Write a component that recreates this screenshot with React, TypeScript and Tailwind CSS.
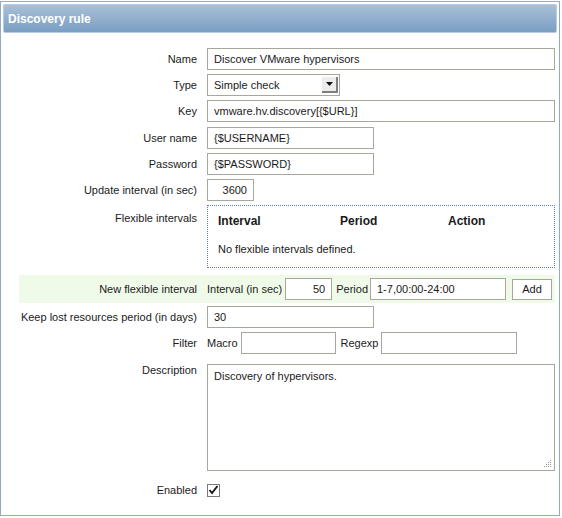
import React from "react";

const inputCls =
  "h-[22px] border border-[#a9a69c] bg-white px-[6px] text-[11px] text-[#1a1a1a] outline-none";

function Label({ children }: { children: React.ReactNode }) {
  return (
    <div className="w-[178px] shrink-0 whitespace-nowrap text-right text-[11px] text-[#1a1a1a]">
      {children}
    </div>
  );
}

export default function App() {
  return (
    <div
      className="mt-[1px] h-[515px] w-[560px] border border-[#8eacca] bg-white p-[2px]"
      style={{ fontFamily: '"Liberation Sans", Arial, sans-serif' }}
    >
      <div className="flex h-[29px] items-center rounded-[2px] border border-[#b7cbe0] bg-gradient-to-b from-[#a9c0d8] to-[#7a9ec3] pl-[4px] text-[12px] font-bold text-white">
        Discovery rule
      </div>

      <div className="pl-[16px] pr-[2px]">
        {/* Name */}
        <div className="mt-[15px] flex items-center gap-[10px]">
          <Label>Name</Label>
          <input className={`${inputCls} w-[349px]`} defaultValue="Discover VMware hypervisors" />
        </div>
        {/* Type */}
        <div className="mt-[4px] flex items-center gap-[10px]">
          <Label>Type</Label>
          <div className="flex h-[22px] w-[133px] items-center justify-between border border-[#a9a69c] bg-white pl-[6px] pr-[1px] text-[11px] text-[#1a1a1a]">
            <span>Simple check</span>
            <div className="flex h-[16px] w-[16px] items-center justify-center border-b-2 border-r-2 border-b-[#7e7e7e] border-r-[#7e7e7e] bg-[#ececec]">
              <svg width="7" height="4" viewBox="0 0 7 4">
                <path d="M0 0 H7 L3.5 4 Z" fill="#111" />
              </svg>
            </div>
          </div>
        </div>
        {/* Key */}
        <div className="mt-[4px] flex items-center gap-[10px]">
          <Label>Key</Label>
          <input className={`${inputCls} w-[349px]`} defaultValue="vmware.hv.discovery[{$URL}]" />
        </div>
        {/* User name */}
        <div className="mt-[5px] flex items-center gap-[10px]">
          <Label>User name</Label>
          <input className={`${inputCls} w-[167px]`} defaultValue="{$USERNAME}" />
        </div>
        {/* Password */}
        <div className="mt-[4px] flex items-center gap-[10px]">
          <Label>Password</Label>
          <input className={`${inputCls} w-[167px]`} defaultValue="{$PASSWORD}" />
        </div>
        {/* Update interval */}
        <div className="mt-[4px] flex items-center gap-[10px]">
          <Label>Update interval (in sec)</Label>
          <input className={`${inputCls} w-[47px] text-right`} defaultValue="3600" />
        </div>
        {/* Flexible intervals */}
        <div className="mt-[4px] flex gap-[10px]">
          <div className="w-[178px] shrink-0 whitespace-nowrap pt-[5px] text-right text-[11px] text-[#1a1a1a]">
            Flexible intervals
          </div>
          <div className="h-[63px] w-[349px] border border-dotted border-[#5b80b3] px-[10px] pt-[6px] text-[11px] text-[#1a1a1a]">
            <div className="flex text-[12px] font-bold">
              <span className="w-[122px]">Interval</span>
              <span className="w-[108px]">Period</span>
              <span>Action</span>
            </div>
            <div className="mt-[11px]">No flexible intervals defined.</div>
          </div>
        </div>
        {/* New flexible interval */}
        <div className="mt-[7px] flex h-[28px] items-center gap-[10px] bg-[#effbe8]">
          <Label>New flexible interval</Label>
          <div className="flex items-center whitespace-nowrap text-[11px] text-[#1a1a1a]">
            <span>Interval (in sec)</span>
            <input className={`${inputCls} ml-[3px] h-[21px] w-[47px] text-right`} defaultValue="50" />
            <span className="ml-[4px]">Period</span>
            <input className={`${inputCls} ml-[2px] h-[21px] w-[136px]`} defaultValue="1-7,00:00-24:00" />
            <button className="ml-[6px] h-[21px] w-[40px] border border-[#a9a69c] bg-white text-[11px] text-[#1a1a1a]">
              Add
            </button>
          </div>
        </div>
        {/* Keep lost */}
        <div className="mt-[3px] flex items-center gap-[10px]">
          <Label>Keep lost resources period (in days)</Label>
          <input className={`${inputCls} w-[167px]`} defaultValue="30" />
        </div>
        {/* Filter */}
        <div className="mt-[4px] flex items-center gap-[10px]">
          <Label>Filter</Label>
          <div className="flex items-center whitespace-nowrap text-[11px] text-[#1a1a1a]">
            <span>Macro</span>
            <input className={`${inputCls} ml-[3px] w-[95px]`} defaultValue="" />
            <span className="ml-[5px]">Regexp</span>
            <input className={`${inputCls} ml-[3px] w-[136px]`} defaultValue="" />
          </div>
        </div>
        {/* Description */}
        <div className="mt-[10px] flex gap-[10px]">
          <div className="-mt-[2px] w-[178px] shrink-0 text-right text-[11px] text-[#1a1a1a]">
            Description
          </div>
          <div className="relative h-[107px] w-[349px] border border-[#a9a69c] bg-white px-[6px] pt-[3px] text-[11px] text-[#1a1a1a]">
            Discovery of hypervisors.
            <svg className="absolute bottom-[2px] right-[2px]" width="10" height="10" viewBox="0 0 10 10">
              <g fill="#9a9a9a">
                <rect x="8" y="2" width="1" height="1" />
                <rect x="8" y="4" width="1" height="1" />
                <rect x="6" y="4" width="1" height="1" />
                <rect x="8" y="6" width="1" height="1" />
                <rect x="6" y="6" width="1" height="1" />
                <rect x="4" y="6" width="1" height="1" />
                <rect x="8" y="8" width="1" height="1" />
                <rect x="6" y="8" width="1" height="1" />
                <rect x="4" y="8" width="1" height="1" />
                <rect x="2" y="8" width="1" height="1" />
              </g>
            </svg>
          </div>
        </div>
        {/* Enabled */}
        <div className="mt-[11px] flex items-center gap-[10px]">
          <Label>Enabled</Label>
          <div className="flex h-[13px] w-[13px] items-center justify-center border border-[#7a7a7a] bg-white">
            <svg width="11" height="10" viewBox="0 0 11 10">
              <path d="M1.5 5 L4 8 L9.5 1" fill="none" stroke="#111" strokeWidth="1.8" />
            </svg>
          </div>
        </div>
      </div>
    </div>
  );
}
